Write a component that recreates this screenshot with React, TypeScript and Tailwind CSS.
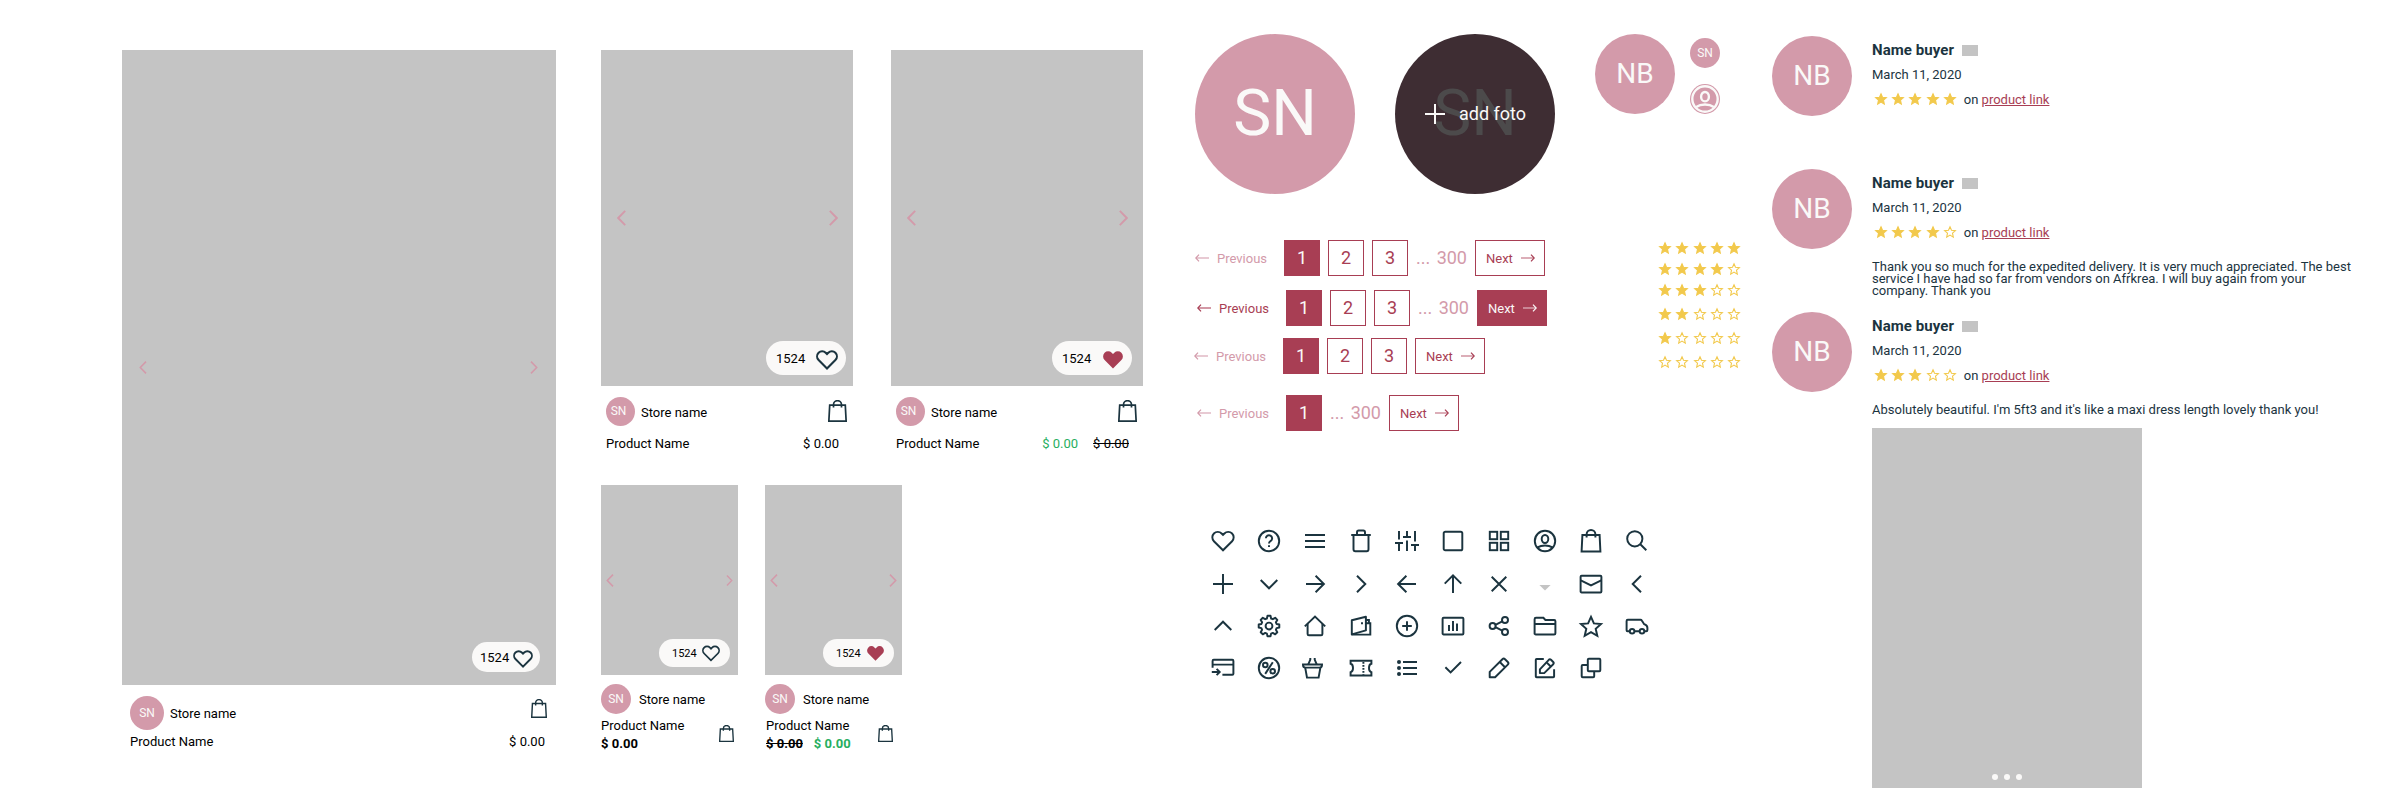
import React from "react";

const INK = "#1b343f";

/* ---------- icons ---------- */

const icons: Record<string, React.ReactNode> = {
  heart: <path d="M12 21.3 2.9 12.2a5.5 5.5 0 0 1 0-7.7 5.4 5.4 0 0 1 7.7 0L12 5.9l1.4-1.4a5.4 5.4 0 0 1 7.7 0 5.5 5.5 0 0 1 0 7.7z" />,
  help: (
    <>
      <circle cx="12" cy="12" r="10.2" />
      <path d="M8.9 9.3a3.1 3.1 0 1 1 4.9 2.6c-1.1.8-1.8 1.2-1.8 2.5" />
      <path d="M12 16.2v1.9" />
    </>
  ),
  menu: <path d="M2 6h20M2 12h20M2 18h20" />,
  trash: (
    <>
      <path d="M2.2 6h19.6" />
      <path d="M8 6V3.4c0-1.1.6-1.9 1.7-1.9h4.6c1.1 0 1.7.8 1.7 1.9V6" />
      <path d="M4.5 6v14.3c0 1.1.7 1.9 1.8 1.9h11.4c1.1 0 1.8-.8 1.8-1.9V6" />
    </>
  ),
  sliders: <path d="M4 2v8.5M0 14h8M4 14v8M12 2v5.5M8 8h8M12 11.5V22M20 2v10.5M16 16h8M20 16v6" />,
  square: <rect x="2.7" y="2.7" width="18.6" height="18.6" rx="1.6" />,
  grid: (
    <>
      <rect x="2.8" y="2.8" width="7.4" height="7.4" />
      <rect x="13.8" y="2.8" width="7.4" height="7.4" />
      <rect x="2.8" y="13.8" width="7.4" height="7.4" />
      <rect x="13.8" y="13.8" width="7.4" height="7.4" />
    </>
  ),
  user: (
    <>
      <circle cx="12" cy="12" r="10.2" />
      <ellipse cx="12" cy="10" rx="3.3" ry="4" />
      <path d="M4.6 18.4c2-1.3 4.4-2 7.4-2s5.4.7 7.4 2" />
    </>
  ),
  bag: (
    <>
      <path d="M3.4 6h17.2l.8 16.4H2.6z" />
      <path d="M7.6 8.6V5.4a4.4 4.4 0 0 1 8.8 0v3.2" />
    </>
  ),
  search: (
    <>
      <circle cx="9.8" cy="9.8" r="7.6" />
      <path d="m15.3 15.3 6 6" />
    </>
  ),
  plus: <path d="M12 2v20M2 12h20" />,
  chevronDown: <path d="m3.7 8 8.3 8.3L20.3 8" />,
  arrowRight: <path d="M3 12h18M12.6 3.7 20.9 12l-8.3 8.3" />,
  chevronRight: <path d="m8 3.7 8.3 8.3L8 20.3" />,
  arrowLeft: <path d="M21 12H3M11.4 3.7 3.1 12l8.3 8.3" />,
  arrowUp: <path d="M12 21V3.4M3.7 11.6 12 3.3l8.3 8.3" />,
  close: <path d="m4.7 4.7 14.6 14.6M19.3 4.7 4.7 19.3" />,
  caret: <path d="M6.4 13h11.2L12 18.4z" fill="#c4c4c4" stroke="none" />,
  mail: (
    <>
      <rect x="1.6" y="3.8" width="20.8" height="16.6" rx="1" />
      <path d="m1.8 8.3 10.2 5 10.2-5" />
    </>
  ),
  chevronLeft: <path d="M16 3.7 7.7 12l8.3 8.3" />,
  chevronUp: <path d="M3.7 16 12 7.7l8.3 8.3" />,
  gear: (
    <>
      <path
        strokeLinejoin="round"
        d="M10.5 1.8h3l.6 2.7 1.7.7 2.4-1.4 2.1 2.1-1.4 2.4.7 1.7 2.7.5v3l-2.7.6-.7 1.7 1.4 2.4-2.1 2.1-2.4-1.4-1.7.7-.6 2.7h-3l-.6-2.7-1.7-.7-2.4 1.4-2.1-2.1 1.4-2.4-.7-1.7-2.7-.6v-3l2.7-.5.7-1.7-1.4-2.4 2.1-2.1 2.4 1.4 1.7-.7z"
      />
      <circle cx="12" cy="12" r="3.4" />
    </>
  ),
  home: (
    <>
      <path d="M1.8 12.4 12 2.6l10.2 9.8" />
      <path d="M4.6 10v10c0 .8.5 1.3 1.3 1.3h12.2c.8 0 1.3-.5 1.3-1.3V10" />
    </>
  ),
  wallet: (
    <>
      <path strokeLinejoin="round" d="M2.8 6.2 16.9 2.8v13.6L2.8 20.4z" />
      <path d="M16.9 6h3v3M2.8 20.6h18.5V9.2h-4.4" />
      <path d="M13 8.2v2" />
    </>
  ),
  plusCircle: (
    <>
      <circle cx="12" cy="12" r="10.2" />
      <path d="M12 7.2v9.6M7.2 12h9.6" />
    </>
  ),
  chart: (
    <>
      <rect x="1.6" y="3.8" width="20.8" height="16.6" rx="1" />
      <path d="M8 11v6M12 7v10M16 9.6V17" />
    </>
  ),
  share: (
    <>
      <circle cx="5.6" cy="12" r="3" />
      <circle cx="18" cy="6" r="3" />
      <circle cx="18" cy="18" r="3" />
      <path d="m8.4 10.8 6.9-3.4M8.4 13.2l6.9 3.4" />
    </>
  ),
  folder: <path d="M1.6 10h20.8M1.6 20.2V5.2c0-.8.6-1.4 1.4-1.4h7.4l2 2.2h8.8c.7 0 1.2.5 1.2 1.2v12c0 .8-.5 1.3-1.3 1.3H2.9c-.8 0-1.3-.5-1.3-1.3z" />,
  star: <path d="m12 2.8 2.9 6.6 7.1.7-5.3 4.7 1.6 7L12 18.1l-6.3 3.7 1.6-7L2 10.1l7.1-.7z" />,
  van: (
    <>
      <path d="M4.6 17.2H2.5c-.6 0-.9-.4-.9-1V7c0-.7.5-1.2 1.2-1.2h12.7c.6 0 1 .2 1.3.7l2.4 3.7c2.2.8 3.2 1.9 3.2 3.6v2.2c0 .8-.4 1.2-1.2 1.2h-1.8M9.6 17.2h4.8" />
      <circle cx="7.1" cy="17.2" r="2.3" />
      <circle cx="17" cy="17.2" r="2.3" />
    </>
  ),
  card: (
    <>
      <path d="M1.6 11.8V4.9c0-.7.5-1.1 1.1-1.1h18.6c.6 0 1.1.4 1.1 1.1v12.8c0 .6-.5 1-1.1 1H11.4M1.6 8.6h20.8" />
      <path d="M.8 16h7.6M5.6 12.9 8.7 16l-3.1 3.1" />
    </>
  ),
  percent: (
    <>
      <circle cx="12" cy="12" r="10.2" />
      <circle cx="8.3" cy="9" r="2.3" />
      <circle cx="15.7" cy="15.2" r="2.3" />
      <path d="m15.8 6.3-7.6 11.6" />
    </>
  ),
  basket: (
    <>
      <path d="M0 8.4V9c0 2 .8 2.6 2.6 2.6h13.8c1.8 0 2.6-.7 2.6-2.6v-.6z" />
      <path d="m2.2 11.6 1.8 10h11.6l1.8-10" />
      <path d="M7.3 2v1.6L5.2 8.6M11.7 2v1.6l2.1 5" />
    </>
  ),
  ticket: (
    <>
      <path d="M1.6 4.8h20.8v3c-3.2.6-3.2 7.8 0 8.4v3.2H1.6v-3.2c3.2-.6 3.2-7.8 0-8.4z" />
      <path strokeDasharray="1.7 1.3" d="M14.4 6v12.8" />
    </>
  ),
  list: (
    <>
      <path d="M8 6h14M8 12h14M8 18h14" />
      <g fill="currentColor" stroke="none">
        <circle cx="4" cy="6" r="2" />
        <circle cx="4" cy="12" r="2" />
        <circle cx="4" cy="18" r="2" />
      </g>
    </>
  ),
  check: <path d="m4.4 11.2 5.2 5.2L20 6" />,
  pencil: (
    <>
      <path strokeLinejoin="round" d="M2.7 21.3v-5.4L15.4 3.2c.8-.8 1.8-.8 2.6 0l2.8 2.8c.8.8.8 1.8 0 2.6L8.1 21.3z" />
      <path d="m12.8 6 5.2 5.2" />
    </>
  ),
  edit: (
    <>
      <path d="M10.8 2.9H3.6c-.5 0-.8.3-.8.8v16.7c0 .5.3.8.8.8h16.7c.5 0 .8-.3.8-.8v-7.2" />
      <path strokeLinejoin="round" d="M6.9 17.1v-3.7l8.9-9.6c.7-.7 1.5-.7 2.2 0l2.2 2.2c.7.7.7 1.5 0 2.2l-9 8.9z" />
      <path d="m13.8 6.6 3.7 3.7" />
    </>
  ),
  copy: (
    <>
      <rect x="8.8" y="2.7" width="12.5" height="12.5" rx="1" />
      <path d="M8.8 8.9H3.7c-.6 0-1 .4-1 1v10.4c0 .6.4 1 1 1h10.5c.6 0 1-.4 1-1v-5.1" />
    </>
  ),
};

const iconRows: string[][] = [
  ["heart", "help", "menu", "trash", "sliders", "square", "grid", "user", "bag", "search"],
  ["plus", "chevronDown", "arrowRight", "chevronRight", "arrowLeft", "arrowUp", "close", "caret", "mail", "chevronLeft"],
  ["chevronUp", "gear", "home", "wallet", "plusCircle", "chart", "share", "folder", "star", "van"],
  ["card", "percent", "basket", "ticket", "list", "check", "pencil", "edit", "copy"],
];

function Icon({ name }: { name: string }) {
  return (
    <svg viewBox="0 0 24 24" className="size-6 shrink-0 overflow-visible text-[#1b343f]" fill="none" stroke="currentColor" strokeWidth="1.95">
      {icons[name]}
    </svg>
  );
}

function Bag({ className }: { className: string }) {
  return (
    <svg viewBox="0 0 20 23" preserveAspectRatio="none" className={`shrink-0 ${className}`} fill="none" stroke={INK} strokeWidth="1.8">
      <path d="M1.8 5.4h16.4l.9 16.7H.9z" />
      <path d="M5.8 7.8V4.9a4.2 4.2 0 0 1 8.4 0v2.9" />
    </svg>
  );
}

function Heart({ filled = false, className }: { filled?: boolean; className: string }) {
  return (
    <svg viewBox="0 0 22 20" className={`shrink-0 ${className}`} fill={filled ? "#a83e54" : "none"} stroke={filled ? "none" : INK} strokeWidth="2.1">
      <path d="M11 18.4 2.6 10a5.1 5.1 0 0 1 0-7.2 5 5 0 0 1 7.1 0L11 4.1l1.3-1.3a5 5 0 0 1 7.1 0 5.1 5.1 0 0 1 0 7.2z" />
    </svg>
  );
}

function Chevron({ right = false, className }: { right?: boolean; className: string }) {
  return (
    <svg viewBox="0 0 9 16" className={`shrink-0 ${className}`} fill="none" stroke="#d39aaa" strokeWidth="1.9">
      <path d={right ? "m.8.8 7 7.2-7 7.2" : "m8.2.8-7 7.2 7 7.2"} />
    </svg>
  );
}

function Star({ filled }: { filled: boolean }) {
  return (
    <svg viewBox="0 0 12 12" className="size-3 shrink-0 overflow-visible" fill={filled ? "#f2c94c" : "none"} stroke="#f2c94c" strokeWidth="1.1">
      <path d="m6 .8 1.5 3.4 3.9.4-2.9 2.6.8 3.9L6 9.1l-3.3 2 .8-3.9L.6 4.6l3.9-.4z" />
    </svg>
  );
}

function Stars({ value }: { value: number }) {
  return (
    <div className="flex gap-[5.2px]">
      {[1, 2, 3, 4, 5].map((n) => (
        <Star key={n} filled={n <= value} />
      ))}
    </div>
  );
}

/* ---------- shared pieces ---------- */

function Avatar({ label, className }: { label: string; className: string }) {
  return (
    <div className={`flex shrink-0 items-center justify-center rounded-full bg-[#d39aaa] text-[#faf9f8] ${className}`}>
      <span>{label}</span>
    </div>
  );
}

function Picture({ className, left, right, pill }: { className: string; left: string; right: string; pill: React.ReactNode }) {
  return (
    <div className={`relative flex items-center justify-between bg-[#c4c4c4] ${className}`}>
      <Chevron className={left} />
      <Chevron right className={right} />
      {pill}
    </div>
  );
}

function MediumCard({ sale = false }: { sale?: boolean }) {
  return (
    <article className="w-[252px]">
      <Picture
        className="h-[336px] pl-4 pr-[15px]"
        left="h-4 w-[9px]"
        right="h-4 w-[9px]"
        pill={
          <div className={`absolute top-[291px] flex h-[34px] w-20 items-center justify-between rounded-full bg-[#faf9f8] pl-[10px] pr-2 ${sale ? "left-[161px]" : "left-[165px]"}`}>
            <span>1524</span>
            <Heart filled={sale} className="mt-1 h-5 w-[22px]" />
          </div>
        }
      />
      <div className="flex h-[50px] items-center pl-[5px] pr-[6px]">
        <Avatar label="SN" className="size-[29px] pb-px pr-1 text-[12px]" />
        <span className="ml-[6px] mt-[3px]">Store name</span>
        <Bag className="ml-auto h-[22px] w-[19px]" />
      </div>
      <div className="flex h-[15px] items-center pl-[5px] pr-[14px]">
        <span>Product Name</span>
        <span className="ml-auto flex gap-[15px]">
          {sale && <span className="text-[#27ae60]">$ 0.00</span>}
          <span className={sale ? "line-through" : ""}>$ 0.00</span>
        </span>
      </div>
    </article>
  );
}

function SmallCard({ sale = false }: { sale?: boolean }) {
  return (
    <article className="w-[137px]">
      <Picture
        className="h-[190px] pl-[5px] pr-[5px]"
        left="h-[13px] w-[8px]"
        right={sale ? "h-[13px] w-[8px]" : "h-[11px] w-[7px]"}
        pill={
          <div className="absolute left-[58px] top-[154px] flex h-7 w-[71px] items-center rounded-full bg-[#faf9f8] pl-[13px] text-[11px]">
            <span>1524</span>
            <Heart filled={sale} className={`ml-[5px] mt-px h-[17px] ${sale ? "w-[19px]" : "w-[18px]"}`} />
          </div>
        }
      />
      <div className="mt-[9px] flex items-center">
        <Avatar label="SN" className="size-[30px] text-[12px]" />
        <span className="ml-2">Store name</span>
      </div>
      <div className={`flex items-center justify-between ${sale ? "pr-[9px]" : "pr-[4px]"}`}>
        <div className={`flex flex-col pt-[3px] leading-[18px] ${sale ? "pl-px" : ""}`}>
          <span>Product Name</span>
          <span className="flex gap-[11px] font-bold">
            <span className={sale ? "line-through" : ""}>$ 0.00</span>
            {sale && <span className="text-[#27ae60]">$ 0.00</span>}
          </span>
        </div>
        <Bag className="h-[17px] w-[15px]" />
      </div>
    </article>
  );
}

/* ---------- pagination ---------- */

function Arrow({ left = false, color, line }: { left?: boolean; color: string; line: string }) {
  return (
    <svg viewBox="0 0 14 8" className="h-2 w-[14px] shrink-0" fill="none" strokeWidth="1.2">
      <path d={left ? "M1 4h13" : "M0 4h13"} stroke={line} strokeWidth="1.4" />
      <path d={left ? "M4 .6.8 4 4 7.4" : "m10 .6 3.2 3.4L10 7.4"} stroke={color} />
    </svg>
  );
}

type PagerProps = { className: string; pages: number[]; total?: boolean; active?: boolean };

function Pager({ className, pages, total = false, active = false }: PagerProps) {
  return (
    <nav className={`flex h-9 items-center text-[#a83e54] ${className}`}>
      <div className={`flex w-[89px] items-center gap-2 ${active ? "text-[#a83e54]" : "text-[#d39aaa]"}`}>
        <Arrow left color={active ? "#a83e54" : "#d39aaa"} line={active ? "#c06e80" : "#dfb4c0"} />
        <span>Previous</span>
      </div>
      <div className="flex gap-2 text-[18px]">
        {pages.map((page) => (
          <span key={page} className={`flex size-9 items-center justify-center border border-[#a83e54] ${page === 1 ? "bg-[#a83e54] text-[#faf9f8]" : ""}`}>
            {page}
          </span>
        ))}
      </div>
      {total && (
        <div className="flex w-[59px] items-center justify-between pl-2 text-[18px] text-[#d39aaa]">
          <span>...</span>
          <span>300</span>
        </div>
      )}
      <div className={`ml-2 flex h-9 w-[70px] items-center justify-between border border-[#a83e54] pl-[10px] pr-[9px] ${active ? "bg-[#a83e54] text-[#faf9f8]" : ""}`}>
        <span>Next</span>
        <Arrow color={active ? "#faf9f8" : "#a83e54"} line={active ? "#d8a7b2" : "#cd8c9a"} />
      </div>
    </nav>
  );
}

/* ---------- reviews ---------- */

function Review({ stars }: { stars: number }) {
  return (
    <div className="flex h-20 gap-5">
      <Avatar label="NB" className="size-20 text-[28px]" />
      <div className="flex flex-col pt-[3px]">
        <div className="flex h-[22px] items-center gap-2">
          <span className="text-[15px] font-bold tracking-[0.07px]">Name buyer</span>
          <span className="h-[11px] w-4 bg-[#c4c4c4]" />
        </div>
        <span className="mt-[3px] h-[22px] leading-[22px]">March 11, 2020</span>
        <div className="flex h-[26px] items-center pl-[3px]">
          <Stars value={stars} />
          <span className="ml-2 whitespace-nowrap">
            on <a className="text-[#a83e54] underline underline-offset-1">product link</a>
          </span>
        </div>
      </div>
    </div>
  );
}

export default function App() {
  return (
    <main className="flex h-[800px] w-[2400px] overflow-hidden bg-white pl-[122px] font-[Roboto,sans-serif] text-[13px] leading-none text-black">
      <article className="mt-[50px] w-[434px] shrink-0">
        <Picture
          className="h-[635px] pl-[17px] pr-[18px]"
          left="h-[13px] w-[8px]"
          right="h-[13px] w-[8px]"
          pill={
            <div className="absolute left-[350px] top-[592px] flex h-[30px] w-[68px] items-center justify-between rounded-full bg-[#faf9f8] pl-2 pr-[7px]">
              <span>1524</span>
              <Heart className="mt-1 h-[18px] w-5" />
            </div>
          }
        />
        <div className="mt-[11px] flex items-center pl-2 pr-[9px]">
          <Avatar label="SN" className="size-[34px] text-[12px]" />
          <span className="ml-[6px]">Store name</span>
          <Bag className="mb-[10px] ml-auto h-[19px] w-4" />
        </div>
        <div className="flex h-[23px] items-center justify-between pl-2 pr-[11px]">
          <span>Product Name</span>
          <span>$ 0.00</span>
        </div>
      </article>

      <section className="ml-[45px] mt-[50px] w-[542px] shrink-0">
        <div className="flex gap-[38px]">
          <MediumCard />
          <MediumCard sale />
        </div>
        <div className="mt-[34px] flex gap-[27px]">
          <SmallCard />
          <SmallCard sale />
        </div>
      </section>

      <section className="ml-[52px] mt-[34px] w-[545px] shrink-0">
        <div className="flex h-40">
          <Avatar label="SN" className="size-40 text-[64px]" />
          <div className="relative ml-10 flex size-40 shrink-0 items-center justify-center rounded-full bg-[#3e2d33] text-[64px] text-[#4c4a4b]">
            <span>SN</span>
            <div className="absolute inset-0 flex items-center gap-[14px] pl-[30px] text-[18px] text-[#faf9f8]">
              <svg viewBox="0 0 20 20" className="size-5" stroke="#faf9f8" strokeWidth="2">
                <path d="M10 0v20M0 10h20" />
              </svg>
              <span>add foto</span>
            </div>
          </div>
          <Avatar label="NB" className="ml-10 size-20 text-[28px]" />
          <div className="ml-[15px] mt-1 flex flex-col gap-4">
            <Avatar label="SN" className="size-[30px] text-[12px]" />
            <svg viewBox="0 0 30 30" className="size-[30px]" fill="none" stroke="#faf9f8" strokeWidth="2.4">
              <circle cx="15" cy="15" r="15" fill="#d39aaa" stroke="none" />
              <circle cx="15" cy="15" r="12.7" />
              <ellipse cx="15" cy="12.7" rx="3.9" ry="4.7" />
              <path d="M6.2 23c2.4-1.7 5.4-2.5 8.8-2.5s6.4.8 8.8 2.5" />
            </svg>
          </div>
        </div>

        <div className="mt-[46px] flex h-[191px] justify-between">
          <div>
            <Pager className="" pages={[1, 2, 3]} total />
            <Pager className="ml-[2px] mt-[14px]" pages={[1, 2, 3]} total active />
            <Pager className="-ml-px mt-3" pages={[1, 2, 3]} />
            <Pager className="ml-[2px] mt-[21px]" pages={[1]} total />
          </div>
          <div className="flex flex-col pt-[2px]">
            <Stars value={5} />
            <div className="mt-[9px]"><Stars value={4} /></div>
            <div className="mt-[9px]"><Stars value={3} /></div>
            <div className="mt-3"><Stars value={2} /></div>
            <div className="mt-3"><Stars value={1} /></div>
            <div className="mt-3"><Stars value={0} /></div>
          </div>
        </div>

        <div className="ml-4 mt-[98px] flex flex-col gap-[18px]">
          {iconRows.map((row, i) => (
            <div key={i} className={`flex gap-[22px] ${i === 1 ? "mt-px" : ""}`}>
              {row.map((name) => (
                <Icon key={name} name={name} />
              ))}
            </div>
          ))}
        </div>
      </section>

      <section className="ml-8 mt-9 w-[600px] shrink-0 text-[#1b343f]">
        <Review stars={5} />
        <div className="mt-[53px]">
          <Review stars={4} />
        </div>
        <p className="ml-[100px] mt-3 h-9 w-[490px] leading-3">
          Thank you so much for the expedited delivery. It is very much appreciated. The best service I have had so far from vendors on Afrkrea. I will buy again from your company. Thank you
        </p>
        <div className="mt-[15px]">
          <Review stars={3} />
        </div>
        <p className="ml-[100px] mt-3 leading-3">Absolutely beautiful. I'm 5ft3 and it's like a maxi dress length lovely thank you!</p>
        <div className="ml-[100px] mt-3 flex h-[360px] w-[270px] items-end justify-center gap-[6px] bg-[#c4c4c4] pb-2">
          <span className="size-[6px] rounded-full bg-[#faf9f8]" />
          <span className="size-[6px] rounded-full bg-[#faf9f8]" />
          <span className="size-[6px] rounded-full bg-[#faf9f8]" />
        </div>
      </section>
    </main>
  );
}
